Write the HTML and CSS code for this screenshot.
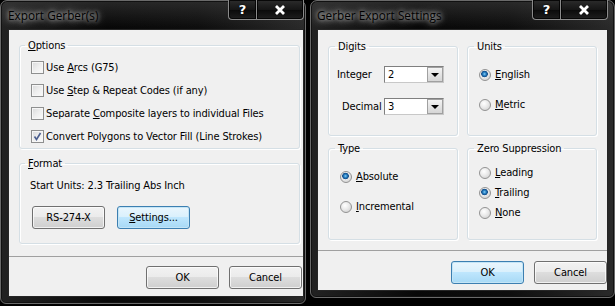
FILE: index.html
```html
<!DOCTYPE html>
<html>
<head>
	<meta charset="UTF-8">
	<title>Export Gerber(s)</title>
	<link rel="stylesheet" href="styles.css">
</head>
<body>
<div class="desk">

	<div class="win w1">
		<div class="titlebar">
			<span class="title">Export Gerber(s)</span>
			<div class="capbtns">
				<span class="cap help">?</span>
				<span class="cap close"><svg width="12" height="10" viewBox="0 0 12 10"><path d="M2 1 L10 9 M10 1 L2 9" stroke="#fff" stroke-width="2.8"/></svg></span>
			</div>
		</div>
		<div class="client">
			<div class="content c1">
				<fieldset class="group">
					<legend><u>O</u>ptions</legend>
					<div class="inner options">
						<div class="chk"><span class="box"></span><span>Use <u>A</u>rcs (G75)</span></div>
						<div class="chk"><span class="box"></span><span>Use <u>S</u>tep &amp; Repeat Codes (if any)</span></div>
						<div class="chk"><span class="box"></span><span>Separate <u>C</u>omposite layers to individual Files</span></div>
						<div class="chk"><span class="box"><svg width="11" height="11" viewBox="0 0 11 11"><path d="M2.5 5.5 L4.5 8.5 L8.5 2" fill="none" stroke="#4c5f8f" stroke-width="1.6"/></svg></span><span>Convert Polygons to Vector Fill (Line Strokes)</span></div>
					</div>
				</fieldset>
				<fieldset class="group format">
					<legend><u>F</u>ormat</legend>
					<div class="inner fmt">
						<div class="units">Start Units: 2.3 Trailing Abs Inch</div>
						<div class="fbtns">
							<button class="btn">RS-274-X</button>
							<button class="btn focus"><u>S</u>ettings...</button>
						</div>
					</div>
				</fieldset>
			</div>
			<div class="footer f1">
				<button class="btn">OK</button>
				<button class="btn">Cancel</button>
			</div>
		</div>
	</div>

	<div class="win w2">
		<div class="titlebar">
			<span class="title">Gerber Export Settings</span>
			<div class="capbtns">
				<span class="cap help">?</span>
				<span class="cap close"><svg width="12" height="10" viewBox="0 0 12 10"><path d="M2 1 L10 9 M10 1 L2 9" stroke="#fff" stroke-width="2.8"/></svg></span>
			</div>
		</div>
		<div class="client">
			<div class="content c2">
				<fieldset class="group">
					<legend>Digits</legend>
					<div class="inner digits">
						<div class="field"><span class="lbl int">Integer</span><span class="combo"><span class="val">2</span><span class="drop"></span></span></div>
						<div class="field"><span class="lbl dec">Decimal</span><span class="combo"><span class="val">3</span><span class="drop"></span></span></div>
					</div>
				</fieldset>
				<fieldset class="group">
					<legend>Units</legend>
					<div class="inner unitsbox">
						<div class="radio wide"><span class="dot on"></span><span><u>E</u>nglish</span></div>
						<div class="radio wide"><span class="dot"></span><span><u>M</u>etric</span></div>
					</div>
				</fieldset>
				<fieldset class="group">
					<legend>Type</legend>
					<div class="inner typebox">
						<div class="radio wide"><span class="dot on"></span><span><u>A</u>bsolute</span></div>
						<div class="radio wide"><span class="dot"></span><span><u>I</u>ncremental</span></div>
					</div>
				</fieldset>
				<fieldset class="group">
					<legend>Zero Suppression</legend>
					<div class="inner zerobox">
						<div class="radio"><span class="dot"></span><span><u>L</u>eading</span></div>
						<div class="radio"><span class="dot on"></span><span><u>T</u>railing</span></div>
						<div class="radio"><span class="dot"></span><span><u>N</u>one</span></div>
					</div>
				</fieldset>
			</div>
			<div class="footer f2">
				<button class="btn focus">OK</button>
				<button class="btn">Cancel</button>
			</div>
		</div>
	</div>

</div>
</body>
</html>
```

FILE: styles.css
```css
*{
	box-sizing: border-box;
}
body{
	margin: 0;
	width: 615px;
	height: 306px;
	overflow: hidden;
	background-color: #000;
	font-family: "DejaVu Sans Condensed", "DejaVu Sans", sans-serif;
	font-size: 11px;
	letter-spacing: -0.12px;
	color: #000;
}
u{
	text-decoration-thickness: 1px;
	text-underline-offset: 1px;
}
.desk{
	display: flex;
	align-items: flex-start;
	gap: 4px;
}

/* window frame */
.win{
	display: flex;
	flex-direction: column;
	border: 1px solid #6a6a6a;
	border-radius: 7px 7px 6px 6px;
	background:
		linear-gradient(180deg, rgba(70,70,70,.5) 0, rgba(20,20,20,0) 26px),
		linear-gradient(90deg, #222 0, #080808 35%, #0e0e0e 65%, #2a2a2a 100%);
	box-shadow: inset 0 0 0 1px #111;
}
.w1{
	width: 306px;
	height: 304px;
	padding: 0 1px 6px 7px;
}
.w2{
	width: 305px;
	height: 298px;
	padding: 0 6px 6px 6px;
}
.titlebar{
	height: 28px;
	display: flex;
	justify-content: space-between;
	align-items: flex-start;
}
.title{
	margin-top: 6px;
	font-family: "Open Sans", sans-serif;
	font-size: 11.8px;
	letter-spacing: 0;
	line-height: 16px;
	color: #000;
	text-shadow: 0 0 4px rgba(255,255,255,.75), 0 0 9px rgba(255,255,255,.55), 0 0 15px rgba(255,255,255,.4);
}
.capbtns{
	display: flex;
	margin-top: -1px;
}
.cap{
	height: 20px;
	display: flex;
	align-items: center;
	justify-content: center;
	border: 1px solid #8a8a8a;
	border-top: none;
	background: linear-gradient(180deg, #2c2c2c 0, #161616 50%, #0a0a0a 51%, #1e1e1e 100%);
	color: #fff;
	box-shadow: inset 0 0 0 1px rgba(0,0,0,.8);
}
.help{
	width: 28px;
	border-right: none;
	border-radius: 0 0 0 4px;
	font-family: "DejaVu Sans", sans-serif;
	font-weight: bold;
	font-size: 13px;
	text-shadow: 0 0 2px #000;
}
.close{
	width: 48px;
	border-radius: 0 0 4px 0;
}

.client{
	flex: 1;
	display: flex;
	flex-direction: column;
	background-color: #f0f0f0;
	border: 1px solid #262626;
}
.content{
	flex: 1;
}
.c1{
	padding: 9px 3px 0 10px;
}
.c2{
	display: grid;
	grid-template-columns: 130px 130px;
	grid-template-rows: 96px 98px;
	column-gap: 9px;
	row-gap: 6px;
	padding: 10px 10px 0 10px;
}

/* group boxes */
.group{
	margin: 0;
	min-inline-size: 0;
	border: 1px solid #d5dfe5;
	border-radius: 3px;
	box-shadow: inset 1px 1px 0 #fff, 1px 1px 0 #fff;
	padding: 0;
}
legend{
	padding: 0 3px;
	margin-left: 5px;
	line-height: 13px;
}
.c2 legend{
	margin-left: 6px;
}
.options{
	padding: 4px 0 0 11px;
}
.chk{
	display: flex;
	align-items: center;
	height: 23px;
}
.box{
	width: 13px;
	height: 13px;
	margin-right: 2px;
	border: 1px solid #8e8f8f;
	background: linear-gradient(135deg, #d8d9da 0, #eeeeee 50%, #fbfbfb 100%);
	box-shadow: inset 0 0 0 1px #f6f6f6;
	display: flex;
	align-items: center;
	justify-content: center;
}
.format{
	margin-top: 8px;
}
.fmt{
	padding: 9px 0 14px 10px;
}
.units{
	line-height: 13px;
}
.fbtns{
	display: flex;
	gap: 12px;
	margin: 14px 0 0 2px;
}

/* push buttons */
.btn{
	width: 73px;
	height: 23px;
	padding: 0;
	font-family: inherit;
	font-size: 11px;
	letter-spacing: -0.12px;
	color: #000;
	border: 1px solid #707070;
	border-radius: 3px;
	background: linear-gradient(180deg, #f2f2f2 0, #ebebeb 48%, #dddddd 50%, #cfcfcf 100%);
	box-shadow: inset 0 0 0 1px rgba(255,255,255,.7);
}
.btn.focus{
	border-color: #3c7fb1;
	background: linear-gradient(180deg, #eaf6fd 0, #d9f0fc 48%, #bee6fd 50%, #a7d9f5 100%);
	box-shadow: inset 0 0 0 1px #c4e5f6;
}
.footer{
	display: flex;
	justify-content: flex-end;
	gap: 10px;
	border-top: 1px solid #a0a0a0;
}
.f1{
	height: 40px;
	padding: 9px 1px 0 0;
}
.f2{
	height: 40px;
	padding: 10px 0 0 0;
}

/* Gerber settings dialog */
.digits{
	padding-top: 13px;
}
.field{
	display: flex;
	align-items: center;
	height: 17px;
}
.field + .field{
	margin-top: 15px;
}
.lbl{
	width: 55px;
}
.int{
	padding-left: 8px;
}
.dec{
	padding-left: 13px;
}
.combo{
	width: 60px;
	height: 17px;
	display: flex;
	justify-content: space-between;
	background-color: #fff;
	border: 1px solid #7f7f7f;
	border-right-color: #c8c8c8;
	border-bottom-color: #c8c8c8;
}
.val{
	padding-left: 3px;
	line-height: 15px;
}
.drop{
	width: 16px;
	height: 15px;
	border: 1px solid #a0a0a0;
	background: linear-gradient(180deg, #f4f4f4 0, #e4e4e4 50%, #d6d6d6 100%);
	display: flex;
	align-items: center;
	justify-content: center;
}
.drop::after{
	content: "";
	border-left: 4px solid transparent;
	border-right: 4px solid transparent;
	border-top: 4px solid #000;
}
.unitsbox{
	padding: 15px 0 0 11px;
}
.typebox{
	padding: 15px 0 0 11px;
}
.zerobox{
	padding: 11px 0 0 11px;
}
.radio{
	display: flex;
	align-items: center;
	height: 13px;
}
.radio + .radio{
	margin-top: 7px;
}
.radio.wide + .radio.wide{
	margin-top: 17px;
}
.dot{
	width: 12px;
	height: 12px;
	margin-right: 4px;
	border-radius: 50%;
	border: 1px solid #939393;
	background: radial-gradient(circle at 40% 35%, #ffffff 0, #eaeaea 45%, #c9c9c9 100%);
}
.dot.on{
	background:
		radial-gradient(circle at 45% 40%, #8fd0f5 0, #2b86c8 1.5px, #114a86 3px, rgba(17,74,134,0) 3.6px),
		radial-gradient(circle at 40% 35%, #ffffff 0, #eaeaea 45%, #c9c9c9 100%);
}
```
